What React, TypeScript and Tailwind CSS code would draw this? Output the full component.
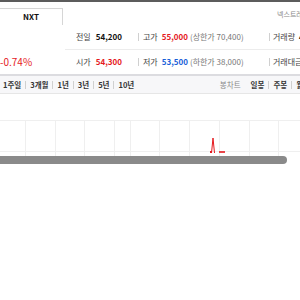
import React from "react";

const Sep = () => <span className="inline-block w-px h-[8px] bg-[#d0d0d0]" />;

export default function App() {
  const vlines = [25, 55, 84, 114, 130, 159, 189, 219, 249, 278];
  return (
    <div className="w-[300px] h-[300px] overflow-hidden bg-white font-['Noto_Sans_CJK_KR','Noto_Sans',sans-serif] text-[#333]">
      <div className="h-[2px] bg-[#5c5c5c]" />
      <div className="flex h-[23px] items-start">
        <div className="mt-[6px] h-[17px] w-[63px] shrink-0 border-t border-r border-[#d6d6d6] flex items-center justify-center text-[8px] font-bold text-[#111] leading-none">
          NXT
        </div>
        <div className="w-[214px] shrink-0" />
        <div className="mt-[9px] text-[7px] text-[#888] whitespace-nowrap leading-none">넥스트레이드</div>
      </div>

      <div className="flex h-[49px]">
        <div className="w-[65px] shrink-0 flex flex-col">
          <div className="h-[25px]" />
          <div className="h-[24px] flex items-center text-[10px] text-[#e5191e] leading-none whitespace-nowrap">-0.74%</div>
        </div>
        <div className="flex-1 flex flex-col text-[8px] leading-none whitespace-nowrap">
          <div className="h-[25px] flex items-center border-b border-[#ececec]">
            <div className="w-[73px] shrink-0 pl-[11px] flex items-center">
              <span className="text-[#444]">전일</span>
              <span className="ml-[5px] font-bold text-[#111]">54,200</span>
            </div>
            <Sep />
            <div className="w-[130px] shrink-0 pl-[4px] flex items-center">
              <span className="text-[#444]">고가</span>
              <span className="ml-[4px] font-bold text-[#e5191e]">55,000</span>
              <span className="ml-[2px] text-[#777]">(상한가 70,400)</span>
            </div>
            <Sep />
            <div className="pl-[3px] flex items-center">
              <span className="text-[#444]">거래량</span>
              <span className="ml-[4px] font-bold text-[#111]">4,128,905</span>
            </div>
          </div>
          <div className="h-[24px] flex items-center">
            <div className="w-[73px] shrink-0 pl-[11px] flex items-center">
              <span className="text-[#444]">시가</span>
              <span className="ml-[5px] font-bold text-[#e5191e]">54,300</span>
            </div>
            <Sep />
            <div className="w-[130px] shrink-0 pl-[4px] flex items-center">
              <span className="text-[#444]">저가</span>
              <span className="ml-[4px] font-bold text-[#1a5fd8]">53,500</span>
              <span className="ml-[2px] text-[#777]">(하한가 38,000)</span>
            </div>
            <Sep />
            <div className="pl-[3px] flex items-center">
              <span className="text-[#444]">거래대금</span>
              <span className="ml-[4px] font-bold text-[#111]">223,810</span>
            </div>
          </div>
        </div>
      </div>

      <div className="h-[20px] border-t-2 border-b border-t-[#dcdce0] border-b-[#e6e6e6] bg-[#f7f7f9] flex items-center text-[7.5px] leading-none whitespace-nowrap">
        <div className="pl-[3px] flex items-center gap-[4px] font-semibold text-[#333]">
          <span>1주일</span><Sep />
          <span>3개월</span><Sep />
          <span>1년</span><Sep />
          <span>3년</span><Sep />
          <span>5년</span><Sep />
          <span>10년</span>
        </div>
        <div className="ml-auto flex items-center gap-[4px] -mr-[10px]">
          <span className="text-[#888] mr-[6px]">봉차트</span>
          <span className="font-semibold text-[#333]">일봉</span><Sep />
          <span className="font-semibold text-[#333]">주봉</span><Sep />
          <span className="font-semibold text-[#333]">월봉</span>
        </div>
      </div>

      <svg width="300" height="62" className="block">
        <line x1="0" y1="26.5" x2="300" y2="26.5" stroke="#efefef" strokeWidth="1" />
        <line x1="0" y1="57.5" x2="300" y2="57.5" stroke="#efefef" strokeWidth="1" />
        {vlines.map((x) => (
          <line key={x} x1={x + 0.5} y1="26" x2={x + 0.5} y2="62" stroke="#efefef" strokeWidth="1" />
        ))}
        <polyline points="211.5,59 213,44 214.5,59" fill="none" stroke="#e5191e" strokeWidth="1" />
        <rect x="210" y="57" width="2" height="2" fill="#e5191e" />
        <rect x="219" y="57" width="6" height="2" fill="#e5191e" opacity="0.8" />
      </svg>
      <div className="h-[8px] w-[287px] bg-[#8a8a8a] rounded-r-[4px]" />
    </div>
  );
}
